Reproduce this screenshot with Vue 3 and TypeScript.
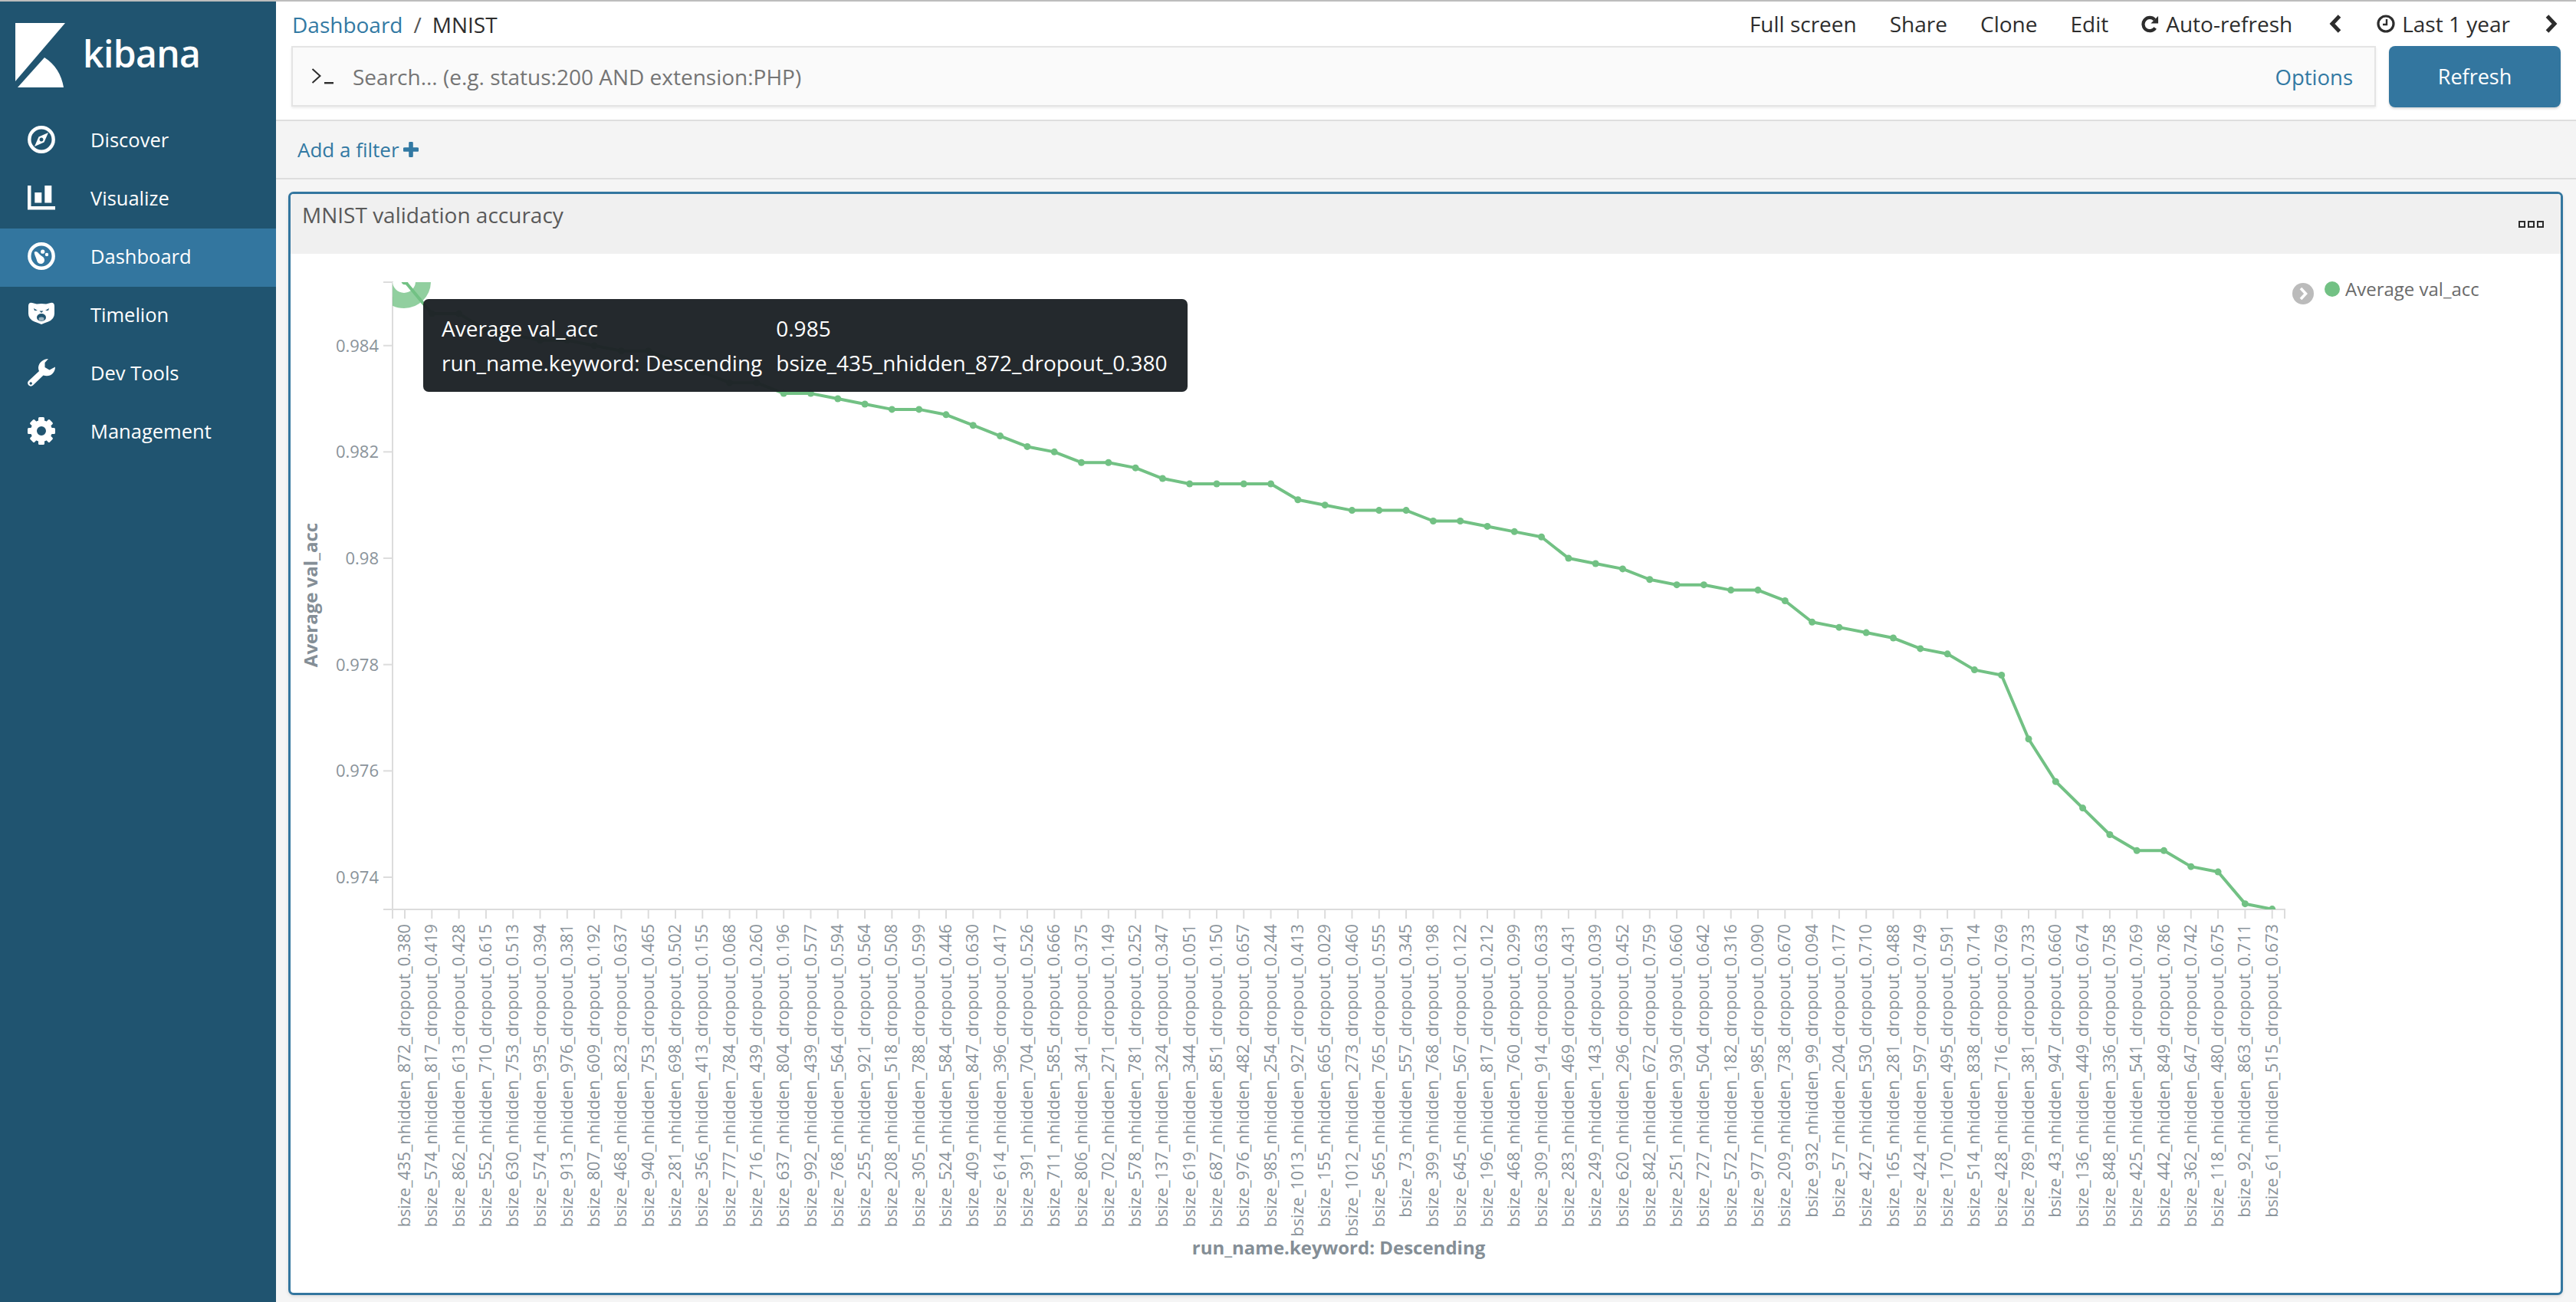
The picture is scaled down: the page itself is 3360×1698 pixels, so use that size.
<script setup lang="ts">
const navItems = ['Discover', 'Visualize', 'Dashboard', 'Timelion', 'Dev Tools', 'Management']

const labels: string[] = [
  'bsize_435_nhidden_872_dropout_0.380','bsize_574_nhidden_817_dropout_0.419','bsize_862_nhidden_613_dropout_0.428','bsize_552_nhidden_710_dropout_0.615','bsize_630_nhidden_753_dropout_0.513',
  'bsize_574_nhidden_935_dropout_0.394','bsize_913_nhidden_976_dropout_0.381','bsize_807_nhidden_609_dropout_0.192','bsize_468_nhidden_823_dropout_0.637','bsize_940_nhidden_753_dropout_0.465',
  'bsize_281_nhidden_698_dropout_0.502','bsize_356_nhidden_413_dropout_0.155','bsize_777_nhidden_784_dropout_0.068','bsize_716_nhidden_439_dropout_0.260','bsize_637_nhidden_804_dropout_0.196',
  'bsize_992_nhidden_439_dropout_0.577','bsize_768_nhidden_564_dropout_0.594','bsize_255_nhidden_921_dropout_0.564','bsize_208_nhidden_518_dropout_0.508','bsize_305_nhidden_788_dropout_0.599',
  'bsize_524_nhidden_584_dropout_0.446','bsize_409_nhidden_847_dropout_0.630','bsize_614_nhidden_396_dropout_0.417','bsize_391_nhidden_704_dropout_0.526','bsize_711_nhidden_585_dropout_0.666',
  'bsize_806_nhidden_341_dropout_0.375','bsize_702_nhidden_271_dropout_0.149','bsize_578_nhidden_781_dropout_0.252','bsize_137_nhidden_324_dropout_0.347','bsize_619_nhidden_344_dropout_0.051',
  'bsize_687_nhidden_851_dropout_0.150','bsize_976_nhidden_482_dropout_0.657','bsize_985_nhidden_254_dropout_0.244','bsize_1013_nhidden_927_dropout_0.413','bsize_155_nhidden_665_dropout_0.029',
  'bsize_1012_nhidden_273_dropout_0.460','bsize_565_nhidden_765_dropout_0.555','bsize_73_nhidden_557_dropout_0.345','bsize_399_nhidden_768_dropout_0.198','bsize_645_nhidden_567_dropout_0.122',
  'bsize_196_nhidden_817_dropout_0.212','bsize_468_nhidden_760_dropout_0.299','bsize_309_nhidden_914_dropout_0.633','bsize_283_nhidden_469_dropout_0.431','bsize_249_nhidden_143_dropout_0.039',
  'bsize_620_nhidden_296_dropout_0.452','bsize_842_nhidden_672_dropout_0.759','bsize_251_nhidden_930_dropout_0.660','bsize_727_nhidden_504_dropout_0.642','bsize_572_nhidden_182_dropout_0.316',
  'bsize_977_nhidden_985_dropout_0.090','bsize_209_nhidden_738_dropout_0.670','bsize_932_nhidden_99_dropout_0.094','bsize_57_nhidden_204_dropout_0.177','bsize_427_nhidden_530_dropout_0.710',
  'bsize_165_nhidden_281_dropout_0.488','bsize_424_nhidden_597_dropout_0.749','bsize_170_nhidden_495_dropout_0.591','bsize_514_nhidden_838_dropout_0.714','bsize_428_nhidden_716_dropout_0.769',
  'bsize_789_nhidden_381_dropout_0.733','bsize_43_nhidden_947_dropout_0.660','bsize_136_nhidden_449_dropout_0.674','bsize_848_nhidden_336_dropout_0.758','bsize_425_nhidden_541_dropout_0.769',
  'bsize_442_nhidden_849_dropout_0.786','bsize_362_nhidden_647_dropout_0.742','bsize_118_nhidden_480_dropout_0.675','bsize_92_nhidden_863_dropout_0.711','bsize_61_nhidden_515_dropout_0.673',
]

const values: number[] = [
  0.98521,0.9846,0.9846,0.9843,0.9842,0.9841,0.9841,0.984,0.9839,0.9839,
  0.9837,0.9835,0.9833,0.9833,0.9831,0.9831,0.983,0.9829,0.9828,0.9828,
  0.9827,0.9825,0.9823,0.9821,0.982,0.9818,0.9818,0.9817,0.9815,0.9814,
  0.9814,0.9814,0.9814,0.9811,0.981,0.9809,0.9809,0.9809,0.9807,0.9807,
  0.9806,0.9805,0.9804,0.98,0.9799,0.9798,0.9796,0.9795,0.9795,0.9794,
  0.9794,0.9792,0.9788,0.9787,0.9786,0.9785,0.9783,0.9782,0.9779,0.9778,
  0.9766,0.9758,0.9753,0.9748,0.9745,0.9745,0.9742,0.9741,0.9735,0.9734,
]

const xAt = (i: number): number => 528 + 35.3 * i
const yAt = (v: number): number => 450.7 + (0.984 - v) * 69330

const points = values.map((v, i) => ({ x: xAt(i), y: yAt(v) }))
const linePoints = points.map((p) => `${p.x},${p.y}`).join(' ')
const yTicks = ['0.984', '0.982', '0.98', '0.978', '0.976', '0.974'].map((t) => ({ t, y: yAt(Number(t)) }))
const xLabels = labels.map((l, i) => ({ l, x: xAt(i) }))
</script>

<template>
  <div class="page">
    <aside class="sidebar">
      <div class="brand">
        <svg class="brand-mark" viewBox="0 0 66 85" width="66" height="85">
          <path d="M0 0H65L0 76Z" fill="#fff" />
          <path d="M3 84L38 45C52 54 60 67 63 84Z" fill="#fff" />
        </svg>
        <span class="brand-name">kibana</span>
      </div>
      <nav class="nav">
        <a v-for="(item, idx) in navItems" :key="item" class="nav-row" :class="{ active: item === 'Dashboard' }">
          <span class="nav-icon">
            <svg v-if="idx === 0" viewBox="0 0 36 36" width="36" height="36">
              <circle cx="18" cy="18" r="15.7" fill="none" stroke="#fff" stroke-width="4.4" />
              <path fill-rule="evenodd" d="M27 9L21.5 21.5L9 27L14.5 14.5ZM18 15.5a2.5 2.5 0 1 0 .01 0Z" fill="#fff" />
            </svg>
            <svg v-else-if="idx === 1" viewBox="0 0 36 36" width="36" height="36">
              <path d="M0 2H4.5V29H36V33.5H0Z" fill="#fff" />
              <rect x="9.3" y="11" width="9" height="13.5" fill="#fff" />
              <rect x="22.3" y="2" width="9" height="22.5" fill="#fff" />
            </svg>
            <svg v-else-if="idx === 2" viewBox="0 0 36 36" width="36" height="36">
              <circle cx="18" cy="18" r="15.7" fill="none" stroke="#fff" stroke-width="4.4" />
              <circle cx="19.7" cy="12.2" r="2.6" fill="#fff" />
              <circle cx="25" cy="16" r="2.2" fill="#fff" />
              <path d="M9 12.5C11 11 13 12.5 14.5 14.5C16 16.5 18 17.5 20 19C23 21.5 22.5 26 19.5 27.5C16 29 12.5 27 12 23.5C11.5 20 8 15 9 12.5Z" fill="#fff" />
            </svg>
            <svg v-else-if="idx === 3" viewBox="0 0 36 36" width="36" height="36">
              <path d="M1 7.5Q1 2 6 3L12 4.5Q18 3.5 24 4.5L30 3Q35 2 35 7.5L35 17Q35 24 27 27.5Q22 29 18 31Q14 29 9 27.5Q1 24 1 17Z" fill="#fff" />
              <path d="M8 10L13 13L9 13ZM28 10L23 13L27 13Z" fill="#205470" />
              <path d="M15.5 13.5H20.5L18 16Z" fill="#205470" />
              <ellipse cx="18" cy="22" rx="6" ry="5" fill="#205470" />
              <ellipse cx="18" cy="24" rx="3.5" ry="2.4" fill="#fff" opacity=".55" />
            </svg>
            <svg v-else-if="idx === 4" viewBox="0 0 36 36" width="36" height="36">
              <path fill-rule="evenodd" d="M27 0C21 0 15 4 14 11C14 13 14.5 15 15 16L1 29C-.5 31 0 33 1.5 34.5C3 36 5.5 36 7 34.5L20.5 21.5C22 22 23.5 22.3 25 22.3C31 22.3 36 17.5 36 10.5L28.5 14.5L22.5 11V5ZM4.2 30.3a1.7 1.7 0 1 0 .01 0Z" fill="#fff" />
            </svg>
            <svg v-else viewBox="0 0 36 36" width="36" height="36">
              <circle cx="18" cy="18" r="10" fill="none" stroke="#fff" stroke-width="8" />
              <rect v-for="k in 8" :key="k" x="14" y="0" width="8" height="9" rx="1.6" fill="#fff" :transform="`rotate(${k * 45} 18 18)`" />
            </svg>
          </span>
          <span class="nav-text">{{ item }}</span>
        </a>
      </nav>
    </aside>

    <main class="main">
      <header class="topnav">
        <div class="menu-row">
          <div class="crumbs">
            <a class="link">Dashboard</a>
            <span class="slash">/</span>
            <span>MNIST</span>
          </div>
          <div class="actions">
            <span>Full screen</span>
            <span>Share</span>
            <span>Clone</span>
            <span>Edit</span>
            <span class="with-icon">
              <svg viewBox="0 0 24 24" width="23" height="23">
                <path d="M19 17.2A9 9 0 1 1 18.2 6" fill="none" stroke="#2d2d2d" stroke-width="4.4" />
                <path d="M23 1V11H13Z" fill="#2d2d2d" />
              </svg>
              Auto-refresh
            </span>
            <svg class="chev first-chev" viewBox="0 0 17 26" width="17" height="26">
              <path d="M13.5 3L4 13L13.5 23" fill="none" stroke="#2d2d2d" stroke-width="5" />
            </svg>
            <span class="with-icon clock">
              <svg viewBox="0 0 24 24" width="24" height="24">
                <circle cx="12" cy="12" r="10" fill="none" stroke="#2d2d2d" stroke-width="3.2" />
                <path d="M13 6V13H8" fill="none" stroke="#2d2d2d" stroke-width="2.4" />
              </svg>
              Last 1 year
            </span>
            <svg class="chev" viewBox="0 0 17 26" width="17" height="26">
              <path d="M3.5 3L13 13L3.5 23" fill="none" stroke="#2d2d2d" stroke-width="5" />
            </svg>
          </div>
        </div>
        <div class="search-row">
          <div class="search-box">
            <svg viewBox="0 0 30 24" width="30" height="24">
              <path d="M1.5 2L11.5 11L1.5 20" fill="none" stroke="#2d2d2d" stroke-width="2" />
              <rect x="17" y="19" width="12" height="2.4" fill="#2d2d2d" />
            </svg>
            <span class="placeholder">Search... (e.g. status:200 AND extension:PHP)</span>
            <a class="link options">Options</a>
          </div>
          <button class="refresh">Refresh</button>
        </div>
      </header>

      <div class="filter-bar">
        <a class="link">Add a filter</a>
        <svg viewBox="0 0 20 20" width="20" height="20">
          <path d="M10 2V18M2 10H18" stroke="#3279a3" stroke-width="5.6" stroke-linecap="round" />
        </svg>
      </div>

      <section class="panel">
        <div class="panel-head">
          <span class="panel-title">MNIST validation accuracy</span>
          <span class="dots"><i></i><i></i><i></i></span>
        </div>
        <div class="panel-body">
          <svg class="chart" viewBox="379 331 2961 1355" width="2961" height="1355">
            <defs>
              <clipPath id="plot"><rect x="512" y="368" width="2468" height="818" /></clipPath>
            </defs>
            <g class="axis">
              <line x1="512" y1="367" x2="512" y2="1198" />
              <line x1="500" y1="368" x2="512" y2="368" />
              <line x1="500" y1="1186" x2="2981" y2="1186" />
              <line x1="2980" y1="1186" x2="2980" y2="1198" />
              <line v-for="t in yTicks" :key="t.t" x1="500" :y1="t.y" x2="512" :y2="t.y" />
              <line v-for="p in points" :key="p.x" :x1="p.x" y1="1186" :x2="p.x" y2="1198" />
            </g>
            <text v-for="t in yTicks" :key="t.t + 'l'" class="tick" x="494" :y="t.y + 8" text-anchor="end">{{ t.t }}</text>
            <text
              v-for="l in xLabels"
              :key="l.l"
              class="xtick"
              :transform="`translate(${l.x + 7} 1205) rotate(-90)`"
              text-anchor="end"
            >{{ l.l }}</text>
            <g clip-path="url(#plot)">
              <circle cx="527" cy="367" r="25" fill="#fff" stroke="#72c184" stroke-opacity=".78" stroke-width="20" />
              <polyline :points="linePoints" fill="none" stroke="#72c184" stroke-width="4" stroke-linejoin="round" />
              <circle v-for="p in points" :key="p.x" :cx="p.x" :cy="p.y" r="4.5" fill="#72c184" />
            </g>
            <text class="axis-title" transform="translate(414 776) rotate(-90)" text-anchor="middle">Average val_acc</text>
            <text class="axis-title" x="1746" y="1636" text-anchor="middle">run_name.keyword: Descending</text>
          </svg>

          <div class="legend">
            <svg viewBox="0 0 28 28" width="28" height="28">
              <circle cx="14" cy="14" r="14" fill="#bbb" />
              <path d="M11 7L17.5 14L11 21" fill="none" stroke="#fff" stroke-width="3.6" />
            </svg>
            <i class="legend-dot"></i>
            <span>Average val_acc</span>
          </div>

          <table class="tooltip">
            <tbody>
              <tr><td>Average val_acc</td><td>0.985</td></tr>
              <tr><td>run_name.keyword: Descending</td><td>bsize_435_nhidden_872_dropout_0.380</td></tr>
            </tbody>
          </table>
        </div>
      </section>
    </main>
  </div>
</template>

<style scoped>
.page {
  display: flex;
  width: 3360px;
  height: 1698px;
  overflow: hidden;
  box-sizing: border-box;
  border-top: 2px solid #bdbdbd;
  background: #f5f5f5;
  font-family: "Open Sans", "Noto Sans", sans-serif;
  color: #2d2d2d;
}

.sidebar {
  flex: 0 0 360px;
  background: #205470;
  color: #fff;
}

.brand {
  height: 144px;
  display: flex;
  align-items: flex-start;
  padding: 28px 0 0 20px;
  box-sizing: border-box;
}

.brand-name {
  margin: 8px 0 0 22px;
  font-size: 48px;
  line-height: 64px;
  font-weight: 600;
  letter-spacing: -0.6px;
}

.nav-row {
  display: flex;
  align-items: center;
  height: 76px;
  padding-left: 36px;
  font-size: 25.5px;
}

.nav-row.active {
  background: #33769f;
}

.nav-icon {
  display: flex;
  width: 36px;
  height: 36px;
  margin-right: 46px;
  margin-top: -4px;
}

.nav-text {
  margin-top: -4px;
}

.main {
  flex: 1;
  display: flex;
  flex-direction: column;
  min-width: 0;
}

.topnav {
  height: 156px;
  box-sizing: border-box;
  background: #fff;
  border-bottom: 2px solid #dedede;
}

.link {
  color: #3279a3;
}

.menu-row {
  height: 58px;
  display: flex;
  align-items: center;
  justify-content: space-between;
  padding: 0 24px 0 21px;
  font-size: 28px;
}

.crumbs {
  display: flex;
  gap: 14px;
  margin-top: 1px;
}

.slash {
  color: #555;
}

.actions {
  display: flex;
  align-items: center;
  gap: 43px;
  font-size: 28px;
}

.with-icon {
  display: flex;
  align-items: center;
  gap: 9px;
}

.chev,
.clock {
  margin-left: 2px;
}

.first-chev {
  margin-left: 5px;
}

.search-row {
  display: flex;
  gap: 17px;
  padding: 0 20px;
  height: 80px;
}

.search-box {
  flex: 1;
  box-sizing: border-box;
  display: flex;
  align-items: center;
  height: 79px;
  padding: 0 28px 0 24px;
  background: #fafafa;
  border: 2px solid #e4e4e4;
  box-shadow: 0 2px 3px rgba(0, 0, 0, 0.08);
  font-size: 28px;
}

.placeholder {
  flex: 1;
  margin-left: 24px;
  color: #757575;
}

.options {
  margin-top: 2px;
  font-size: 27.5px;
}

.refresh {
  width: 224px;
  height: 80px;
  border: 0;
  border-radius: 8px;
  background: #33769f;
  color: #fff;
  font: 27px "Open Sans", sans-serif;
  padding-bottom: 2px;
  box-shadow: 0 2px 3px rgba(0, 0, 0, 0.15);
}

.filter-bar {
  height: 74px;
  flex: none;
  box-sizing: content-box;
  display: flex;
  align-items: center;
  gap: 5px;
  padding-left: 28px;
  background: #f4f4f4;
  border-bottom: 2px solid #dedede;
  font-size: 26px;
}

.panel {
  flex: none;
  height: 1439px;
  margin: 16px 17px 0 16px;
  box-sizing: border-box;
  display: flex;
  flex-direction: column;
  background: #fff;
  border: 3px solid #33769f;
  border-radius: 7px;
  box-shadow: 0 2px 4px rgba(0, 0, 0, 0.1);
  overflow: hidden;
}

.panel-head {
  flex: none;
  height: 78px;
  display: flex;
  justify-content: space-between;
  padding: 8px 22px 0 15px;
  box-sizing: border-box;
  background: #f0f0f0;
  color: #595959;
  font-size: 28px;
}

.dots {
  display: flex;
  gap: 3px;
  margin-top: 27px;
}

.dots i {
  display: block;
  width: 9px;
  height: 9px;
  box-sizing: border-box;
  border: 2.5px solid #2d2d2d;
}

.panel-body {
  position: relative;
  flex: 1;
}

.chart {
  display: block;
}

.axis line {
  stroke: #dcdcdc;
  stroke-width: 2;
}

.tick {
  font-size: 22px;
  fill: #8a939a;
}

.xtick {
  font-size: 21.7px;
  fill: #8a939a;
}

.axis-title {
  font-size: 24px;
  font-weight: 700;
  fill: #848e96;
}

.legend {
  position: absolute;
  top: 29px;
  left: 2611px;
  display: flex;
  align-items: flex-start;
  font-size: 24px;
  color: #6a6a6a;
}

.legend svg {
  margin-top: 9px;
}

.legend-dot {
  width: 20px;
  height: 20px;
  margin: 7px 7px 0 14px;
  border-radius: 50%;
  background: #72c184;
}

.tooltip {
  position: absolute;
  left: 173px;
  top: 59px;
  border-collapse: separate;
  border-spacing: 0;
  padding: 16px 26px 15px 24px;
  background: rgba(29, 34, 38, 0.97);
  color: #fff;
  border-radius: 7px;
  font-size: 28px;
  line-height: 45px;
  white-space: nowrap;
}

.tooltip td {
  padding: 0 18px 0 0;
}

.tooltip td:last-child {
  padding: 0;
}
</style>

<style>
html,
body {
  margin: 0;
  padding: 0;
  background: #f5f5f5;
}
</style>
